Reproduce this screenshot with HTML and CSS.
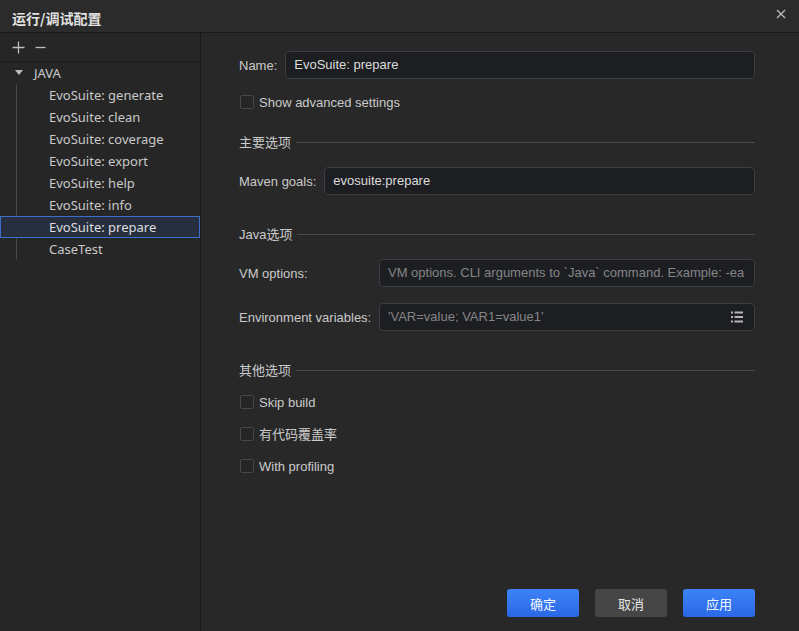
FILE: index.html
```html
<!DOCTYPE html>
<html lang="zh">
<head>
<meta charset="utf-8">
<title>运行/调试配置</title>
<link rel="stylesheet" href="styles.css">
</head>
<body>
<div class="dialog">
  <div class="titlebar">
    <span class="title">运行/调试配置</span>
    <svg class="close" width="10" height="10" viewBox="0 0 10 10"><path d="M1 1L9 9M9 1L1 9" stroke="#b8b8b8" stroke-width="1.4"/></svg>
  </div>
  <div class="main">
    <div class="sidebar">
      <div class="toolbar">
        <svg class="tool" width="13" height="13" viewBox="0 0 13 13"><path d="M6.5 0.5V12.5M0.5 6.5H12.5" stroke="#bdbdbd" stroke-width="1.3"/></svg>
        <svg class="tool" width="11" height="13" viewBox="0 0 11 13"><path d="M0.5 6.5H10.5" stroke="#bdbdbd" stroke-width="1.3"/></svg>
      </div>
      <div class="tree">
        <div class="node root">
          <svg class="arrow" width="8" height="5" viewBox="0 0 8 5"><path d="M0 0H8L4 5Z" fill="#bdbdbd"/></svg>
          <span>JAVA</span>
        </div>
        <div class="children">
          <div class="node">EvoSuite: generate</div>
          <div class="node">EvoSuite: clean</div>
          <div class="node">EvoSuite: coverage</div>
          <div class="node">EvoSuite: export</div>
          <div class="node">EvoSuite: help</div>
          <div class="node">EvoSuite: info</div>
          <div class="node selected">EvoSuite: prepare</div>
          <div class="node">CaseTest</div>
        </div>
      </div>
    </div>
    <div class="content">
      <div class="form">
        <div class="row r-name">
          <label class="label">Name:</label>
          <div class="input">EvoSuite: prepare</div>
        </div>
        <div class="check r-adv"><span class="box"></span><span>Show advanced settings</span></div>

        <div class="section s-main"><span class="stext">主要选项</span><span class="rule"></span></div>
        <div class="row r-maven">
          <label class="label">Maven goals:</label>
          <div class="input">evosuite:prepare</div>
        </div>

        <div class="section s-java"><span class="stext">Java选项</span><span class="rule"></span></div>
        <div class="row r-vm">
          <label class="label wide">VM options:</label>
          <div class="input placeholder">VM options. CLI arguments to `Java` command. Example: -ea</div>
        </div>
        <div class="row r-env">
          <label class="label wide">Environment variables:</label>
          <div class="input placeholder with-icon">
            <span class="ph">'VAR=value; VAR1=value1'</span>
            <svg class="list" width="12" height="12" viewBox="0 0 12 12">
              <rect x="0" y="0.5" width="2" height="2" fill="#b5b5b5"/>
              <rect x="3.5" y="0.5" width="8.5" height="2" fill="#b5b5b5"/>
              <rect x="0" y="5" width="2" height="2" fill="#b5b5b5"/>
              <rect x="3.5" y="5" width="8.5" height="2" fill="#b5b5b5"/>
              <rect x="0" y="9.5" width="2" height="2" fill="#b5b5b5"/>
              <rect x="3.5" y="9.5" width="8.5" height="2" fill="#b5b5b5"/>
            </svg>
          </div>
        </div>

        <div class="section s-other"><span class="stext">其他选项</span><span class="rule"></span></div>
        <div class="check c-skip"><span class="box"></span><span>Skip build</span></div>
        <div class="check c-cov"><span class="box"></span><span class="cjk">有代码覆盖率</span></div>
        <div class="check c-prof"><span class="box"></span><span>With profiling</span></div>
      </div>
      <div class="footer">
        <button class="btn primary">确定</button>
        <button class="btn">取消</button>
        <button class="btn primary">应用</button>
      </div>
    </div>
  </div>
</div>
</body>
</html>
```
FILE: styles.css
```css
* { box-sizing: border-box; }
html, body { margin: 0; padding: 0; background: #282828; }
body {
  width: 799px;
  height: 631px;
  overflow: hidden;
  font-family: "Liberation Sans", "Noto Sans CJK SC", sans-serif;
  font-size: 13px;
  color: #cfcfcf;
}
.dialog {
  display: flex;
  flex-direction: column;
  height: 631px;
}
.titlebar {
  height: 33px;
  flex: 0 0 33px;
  display: flex;
  align-items: center;
  justify-content: space-between;
  padding: 4px 13px 0 12px;
  background: #2b2b2b;
  border-bottom: 1px solid #1a1a1a;
}
.title {
  font-family: "Noto Sans CJK SC", sans-serif;
  font-size: 14px;
  font-weight: 700;
  color: #e2e2e2;
}
.close { display: block; margin-top: -8px; }
.main {
  flex: 1;
  display: flex;
  min-height: 0;
}
.sidebar {
  width: 201px;
  flex: 0 0 201px;
  background: #262626;
  border-right: 1px solid #1b1b1b;
  display: flex;
  flex-direction: column;
}
.toolbar {
  height: 29px;
  flex: 0 0 29px;
  display: flex;
  align-items: center;
  gap: 10px;
  padding: 1px 0 0 12px;
  border-bottom: 1px solid #1b1b1b;
}
.tool { display: block; }
.tree {
  font-family: "Noto Sans", "Open Sans", sans-serif;
  font-size: 13px;
  color: #c9c9c9;
}
.node {
  height: 22px;
  line-height: 22px;
  padding-left: 49px;
  white-space: nowrap;
}
.node.root {
  display: flex;
  align-items: center;
  padding-left: 15px;
}
.arrow { display: block; margin-right: 11px; margin-top: -1px; }
.children {
  background: linear-gradient(#474747, #474747) 16px 0 / 1px 100% no-repeat;
}
.node.selected {
  background: #272f3e;
  border: 1px solid #3c6ed0;
  line-height: 20px;
  padding-left: 48px;
  color: #dedede;
}
.content {
  flex: 1;
  display: flex;
  flex-direction: column;
  justify-content: space-between;
  padding: 18px 44px 14px 38px;
}
.form { display: flex; flex-direction: column; }
.row {
  display: flex;
  align-items: center;
  height: 28px;
}
.label {
  color: #cacaca;
  white-space: nowrap;
  margin-right: 8px;
}
.label.wide { width: 140px; flex: 0 0 140px; margin-right: 0; }
.input {
  flex: 1;
  height: 28px;
  line-height: 26px;
  padding: 0 8px;
  background: #1c1e22;
  border: 1px solid #3b3e43;
  border-radius: 4px;
  color: #dcdcdc;
  white-space: nowrap;
  overflow: hidden;
}
.input.placeholder { color: #858585; }
.input.with-icon {
  display: flex;
  align-items: center;
  justify-content: space-between;
  padding-right: 11px;
}
.list { display: block; }
.check {
  display: flex;
  align-items: center;
  height: 22px;
  color: #cacaca;
}
.cjk { margin-bottom: 2px; }
.box {
  width: 14px;
  height: 14px;
  border: 1px solid #474747;
  border-radius: 2px;
  margin: 0 5px 0 1px;
  background: #262626;
}
.section {
  display: flex;
  align-items: center;
  height: 20px;
  color: #cacaca;
}
.stext { margin-bottom: 2px; }
.section .rule {
  flex: 1;
  height: 1px;
  background: #4a4a4a;
  margin-left: 5px;
}
.r-adv { margin-top: 12px; }
.s-main { margin-top: 19px; }
.r-maven { margin-top: 15px; }
.s-java { margin-top: 29px; }
.r-vm { margin-top: 15px; }
.r-env { margin-top: 16px; }
.s-other { margin-top: 29px; }
.c-skip { margin-top: 11px; }
.c-cov { margin-top: 10px; }
.c-prof { margin-top: 10px; }
.footer {
  display: flex;
  justify-content: flex-end;
  gap: 16px;
}
.btn {
  width: 72px;
  height: 28px;
  border: none;
  border-radius: 3px;
  font-family: "Noto Sans CJK SC", sans-serif;
  font-size: 13px;
  color: #e6e6e6;
  background: #464646;
  padding: 0;
}
.btn.primary {
  background: linear-gradient(#3d82f7, #2a68e6);
  color: #f2f6ff;
}
```
